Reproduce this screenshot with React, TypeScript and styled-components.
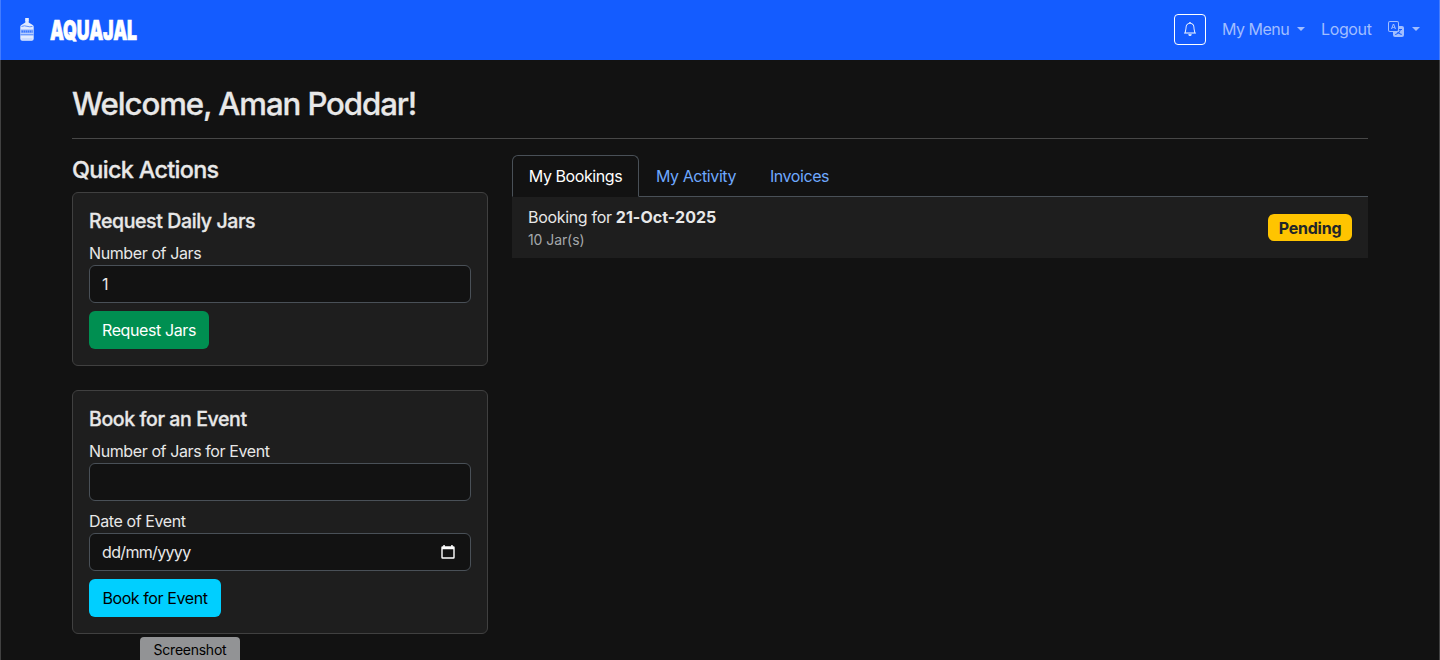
import React, { useState } from "react";
import styled, { createGlobalStyle } from "styled-components";
import { BsBell, BsTranslate } from "react-icons/bs";

const GlobalStyle = createGlobalStyle`
  *, *::before, *::after { box-sizing: border-box; }
  html, body { margin: 0; height: 100%; overflow: hidden; }
  body {
    background: #121212;
    color: #e8e8e8;
    font: 400 16px/24px Inter, "Liberation Sans", sans-serif;
    letter-spacing: -0.4px;
  }
  h2, h4, h5 { margin: 0; font-weight: 500; -webkit-text-stroke: 0.3px currentColor; }
`;

const Shell = styled.div`
  height: 100vh;
  overflow: hidden;
  &::after {
    content: "";
    position: fixed;
    inset: 0;
    border: solid rgba(255, 255, 255, 0.2);
    border-width: 0 1px;
    pointer-events: none;
  }
`;

const Navbar = styled.nav`
  display: flex;
  align-items: center;
  justify-content: space-between;
  height: 60px;
  padding: 0 20px 1px 12px;
  background: #145cff;
`;

const Brand = styled.a`
  display: flex;
  align-items: center;
  gap: 7px;
  color: #fff;
`;

const BrandName = styled.span`
  width: 87px;
  font: 900 27.5px/30px Inter, "Liberation Sans", sans-serif;
  letter-spacing: -0.2px;
  white-space: nowrap;
  -webkit-text-stroke: 0.7px #fff;
  transform: scaleX(0.643);
  transform-origin: left center;
`;

const NavItems = styled.div`
  display: flex;
  align-items: center;
  gap: 16px;
`;

const BellButton = styled.button`
  display: flex;
  align-items: center;
  justify-content: center;
  width: 32px;
  height: 31px;
  padding: 0 0 1px;
  border: 1px solid #fff;
  border-radius: 4px;
  background: transparent;
  color: #fff;
  font-size: 14px;
`;

const NavLink = styled.a<{ $width: number; $tracking?: number }>`
  display: flex;
  align-items: center;
  justify-content: space-between;
  width: ${(p) => p.$width}px;
  height: 24px;
  margin-bottom: 1px;
  color: #a1beff;
  white-space: nowrap;
  letter-spacing: ${(p) => p.$tracking ?? 0}px;
`;

const Caret = styled.i`
  border: 4px solid transparent;
  border-top-color: currentColor;
  border-bottom: 0;
`;

const Container = styled.main`
  width: 1320px;
  margin: 0 auto;
  padding: 24px 12px 0;
`;

const PageTitle = styled.h2`
  padding-top: 1px;
  font-size: 31.2px;
  line-height: 38.4px;
  letter-spacing: -1.1px;
`;

const Divider = styled.hr`
  margin: 15px 0 16px;
  border: 0;
  border-top: 1px solid #474747;
`;

const Columns = styled.div`
  display: grid;
  grid-template-columns: 416px 1fr;
  gap: 24px;
`;

const SectionTitle = styled.h4`
  padding-top: 1px;
  margin-bottom: 7px;
  font-size: 23.4px;
  line-height: 28.8px;
  letter-spacing: -0.68px;
`;

const Card = styled.section`
  display: flex;
  flex-direction: column;
  align-items: flex-start;
  margin-bottom: 24px;
  padding: 16px;
  border: 1px solid #404040;
  border-radius: 6px;
  background: #1e1e1e;
`;

const CardTitle = styled.h5`
  margin-bottom: 8px;
  font-size: 19.5px;
  line-height: 24px;
  letter-spacing: -0.39px;
`;

const Field = styled.label`
  display: block;
  width: 100%;
  margin-bottom: 8px;
`;

const Control = styled.span`
  display: flex;
  align-items: center;
  justify-content: space-between;
  height: 38px;
  padding: 0 15px 0 12px;
  border: 1px solid #495057;
  border-radius: 6px;
  background: #121212;
`;

const DatePlaceholder = styled.span`
  letter-spacing: -0.66px;
`;

const Input = styled.input`
  width: 100%;
  padding: 0;
  border: 0;
  outline: 0;
  background: transparent;
  color: #e8e8e8;
  font: inherit;
  letter-spacing: inherit;
`;

const Button = styled.button<{ $tone: "success" | "info"; $width: number }>`
  width: ${(p) => p.$width}px;
  height: 38px;
  padding: 0;
  border: 0;
  border-radius: 6px;
  background: ${(p) => (p.$tone === "success" ? "#008f51" : "#00cfff")};
  color: ${(p) => (p.$tone === "success" ? "#fff" : "#000")};
  font: inherit;
  letter-spacing: inherit;
  white-space: nowrap;
`;

const Tabs = styled.div`
  display: flex;
  height: 42px;
  border-bottom: 1px solid #495057;
`;

const Tab = styled.button<{ $active: boolean; $width: number }>`
  width: ${(p) => p.$width}px;
  height: 42px;
  padding: 0;
  border: 1px solid ${(p) => (p.$active ? "#495057" : "transparent")};
  border-bottom-color: ${(p) => (p.$active ? "#121212" : "transparent")};
  border-radius: 6px 6px 0 0;
  background: ${(p) => (p.$active ? "#121212" : "transparent")};
  color: ${(p) => (p.$active ? "#fff" : "#6ea8fe")};
  font: inherit;
  letter-spacing: -0.42px;
  white-space: nowrap;
`;

const BookingRow = styled.div`
  display: flex;
  align-items: center;
  justify-content: space-between;
  padding: 8px 16px;
  background: #1e1e1e;
`;

const BookingTitle = styled.div`
  letter-spacing: -0.32px;
  b { font-weight: 700; letter-spacing: 0.04px; }
`;

const BookingMeta = styled.div`
  font-size: 14px;
  line-height: 21px;
  letter-spacing: -0.08px;
  color: #a5a8ab;
`;

const Badge = styled.span`
  width: 84px;
  height: 27px;
  border-radius: 6px;
  background: #ffc400;
  color: #212529;
  font-weight: 700;
  letter-spacing: -0.25px;
  line-height: 28px;
  text-align: center;
`;

const Tooltip = styled.div`
  position: fixed;
  left: 140px;
  top: 637px;
  width: 100px;
  height: 27px;
  border-radius: 4px 4px 0 0;
  background: #929395;
  color: #000;
  font-size: 14px;
  line-height: 26px;
  letter-spacing: -0.25px;
  text-align: center;
`;

const JarLogo = () => (
  <svg width="31" height="30" viewBox="0 0 31 30">
    <path d="M13.200 3h3.600v3h-3.600z" fill="#e8f0ff" />
    <path d="M13.3 5.500h3.400v2l4 2.400q1 .6 1 1.800v12q0 2-2 2h-9.400q-2 0-2-2v-12q0-1.200 1-1.800l4-2.400z" fill="#e0eaff" />
    <path d="M9.500 11.500q3-1.300 5.500-.2 3 1 5.500.1" stroke="#5e91ff" strokeWidth="1" fill="none" />
    <path d="M8.500 14.500h13v4h-13z" fill="#8db0ff" />
    <path d="M9.500 16.500h11" stroke="#3b78ff" strokeWidth="2" strokeDasharray="1.500 .6" />
    <path d="M8.500 19.800h13" stroke="#3b78ff" strokeWidth="1" />
    <path d="M9.500 24h11" stroke="#a9c4ff" strokeWidth=".8" />
  </svg>
);

const CalendarIcon = () => (
  <svg width="14" height="16" viewBox="0 0 14 16" fill="#fff">
    <path fillRule="evenodd" d="M2.300 1h1.500v1.200h6.400V1h1.500v1.200h.8q1.200 0 1.200 1.200v10.100q0 1.200-1.200 1.200h-11Q.3 14.700.3 13.500V3.400q0-1.200 1.200-1.200h.8zM1.700 5.300v8h10.600v-8z" />
  </svg>
);

const tabs = [
  { label: "My Bookings", width: 127 },
  { label: "My Activity", width: 114 },
  { label: "Invoices", width: 93 },
];

export default function App() {
  const [active, setActive] = useState("My Bookings");
  const [jars, setJars] = useState("1");
  const [eventJars, setEventJars] = useState("");

  return (
    <Shell>
      <GlobalStyle />
      <Navbar>
        <Brand>
          <JarLogo />
          <BrandName>AQUAJAL</BrandName>
        </Brand>
        <NavItems>
          <BellButton aria-label="Notifications"><BsBell /></BellButton>
          <NavLink $width={83} $tracking={-0.5}>My Menu<Caret /></NavLink>
          <NavLink $width={51} $tracking={-0.37}>Logout</NavLink>
          <NavLink $width={32}><BsTranslate size={16} /><Caret /></NavLink>
        </NavItems>
      </Navbar>
      <Container>
        <PageTitle>Welcome, Aman Poddar!</PageTitle>
        <Divider />
        <Columns>
          <div>
            <SectionTitle>Quick Actions</SectionTitle>
            <Card>
              <CardTitle>Request Daily Jars</CardTitle>
              <Field>
                Number of Jars
                <Control>
                  <Input value={jars} onChange={(e) => setJars(e.target.value)} />
                </Control>
              </Field>
              <Button $tone="success" $width={120}>Request Jars</Button>
            </Card>
            <Card>
              <CardTitle>Book for an Event</CardTitle>
              <Field>
                Number of Jars for Event
                <Control>
                  <Input value={eventJars} onChange={(e) => setEventJars(e.target.value)} />
                </Control>
              </Field>
              <Field>
                Date of Event
                <Control>
                  <DatePlaceholder>dd/mm/yyyy</DatePlaceholder>
                  <CalendarIcon />
                </Control>
              </Field>
              <Button $tone="info" $width={132}>Book for Event</Button>
            </Card>
          </div>
          <div>
            <Tabs>
              {tabs.map((t) => (
                <Tab key={t.label} $active={t.label === active} $width={t.width} onClick={() => setActive(t.label)}>
                  {t.label}
                </Tab>
              ))}
            </Tabs>
            <BookingRow>
              <div>
                <BookingTitle>Booking for <b>21-Oct-2025</b></BookingTitle>
                <BookingMeta>10 Jar(s)</BookingMeta>
              </div>
              <Badge>Pending</Badge>
            </BookingRow>
          </div>
        </Columns>
      </Container>
      <Tooltip>Screenshot</Tooltip>
    </Shell>
  );
}
